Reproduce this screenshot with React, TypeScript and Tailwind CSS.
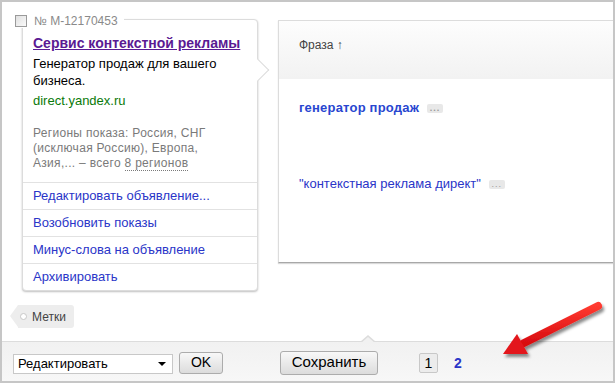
import React from "react";

const font = { fontFamily: '"Liberation Sans", Arial, sans-serif' };

function Dots() {
  return (
    <span className="inline-flex items-center justify-center ml-[8px] w-[16px] h-[9px] rounded-[2px] bg-[#e8e8e8] text-[#999] text-[9px] leading-none tracking-[1px] align-middle">
      ...
    </span>
  );
}

function AdCard() {
  const actions = [
    "Редактировать объявление...",
    "Возобновить показы",
    "Минус-слова на объявление",
    "Архивировать",
  ];
  return (
    <div className="flex flex-col">
      <div className="relative z-10 flex items-center ml-[13px] h-[14px] self-start bg-white pr-[6px] pb-[1px] mb-[-1px]">
        <span className="w-[12px] h-[12px] border border-[#9a9a9a] bg-gradient-to-br from-[#e0e0e0] to-[#fafafa]" />
        <span className="ml-[7px] text-[12px] text-[#8a8a8a]">№ M-12170453</span>
      </div>
      <div className="relative ml-[20px] -mt-[8px] w-[236px] border border-[#dcdcdc] rounded-[4px] bg-white shadow-[0_1px_2px_rgba(0,0,0,0.25)]">
        <div className="absolute right-[-9px] top-[42px] w-[16px] h-[16px] rotate-45 border-t border-r border-[#dcdcdc] bg-white" />
        <div className="relative px-[10px] pt-[15px] pb-[11px]">
          <div className="text-[14px] font-bold text-[#5a1a93] underline leading-[16px]">
            Сервис контекстной рекламы
          </div>
          <div className="mt-[4px] text-[13px] leading-[17px] text-black w-[200px]">
            Генератор продаж для вашего бизнеса.
          </div>
          <div className="mt-[4px] text-[13px] leading-[16px] text-[#0a7a0a]">direct.yandex.ru</div>
          <div className="mt-[17px] text-[12px] leading-[15px] text-[#7a7a7a] tracking-[0.3px]">
            Регионы показа: Россия, СНГ
            <br />
            (исключая Россию), Европа,
            <br />
            Азия,... – всего{" "}
            <span className="border-b border-dotted border-[#7a7a7a]">8 регионов</span>
          </div>
        </div>
        {actions.map((a) => (
          <div
            key={a}
            className="relative h-[27px] border-t border-[#e2e2e2] px-[10px] flex items-center text-[13px] text-[#2a35c8]"
          >
            {a}
          </div>
        ))}
      </div>
      <div className="ml-[8px] mt-[14px] flex">
        <div className="relative ml-[8px] h-[23px] pl-[14px] pr-[8px] flex items-center rounded-r-[3px] bg-[#ededed] text-[12px] text-[#444]">
          <div className="absolute left-[-8px] top-0 w-0 h-0 border-y-[11.5px] border-y-transparent border-r-[8px] border-r-[#ededed]" />
          <span className="absolute left-[2px] top-[8px] w-[7px] h-[7px] rounded-full border border-[#c8c8c8] bg-white" />
          Метки
        </div>
      </div>
    </div>
  );
}

function PhrasePanel() {
  return (
    <div className="flex-1 ml-[10px] mt-[6px] h-[243px] border-l border-t border-[#dcdcdc] border-b border-b-[#a8a8a8] bg-white flex flex-col shadow-[0_1px_1px_rgba(0,0,0,0.15)]">
      <div className="h-[58px] bg-gradient-to-b from-[#fdfdfd] to-[#f2f2f2] pl-[20px] pt-[15px] text-[12px] text-[#444]">
        Фраза ↑
      </div>
      <div className="pl-[20px] pt-[21px] text-[13px] font-bold text-[#2846d0] leading-[16px] tracking-[0.2px]">
        генератор продаж
        <Dots />
      </div>
      <div className="pl-[20px] pt-[60px] text-[13px] text-[#2a35c8] leading-[16px]">
        "контекстная реклама директ"
        <Dots />
      </div>
    </div>
  );
}

function Button({ children, className }: { children: React.ReactNode; className: string }) {
  return (
    <div
      className={
        "flex items-center justify-center border border-[#acacac] rounded-[3px] bg-gradient-to-b from-[#f8f8f8] to-[#dcdcdc] text-black " +
        className
      }
    >
      {children}
    </div>
  );
}

function BottomBar() {
  return (
    <div className="relative h-[40px] border-t border-[#dcdcdc] bg-gradient-to-b from-[#f1f1f1] to-[#f7f7f7] flex items-center">
      <div className="absolute left-[358px] top-[-7px] w-0 h-0 border-x-[8px] border-x-transparent border-b-[7px] border-b-[#dcdcdc]" />
      <div className="absolute left-[359px] top-[-5px] w-0 h-0 border-x-[7px] border-x-transparent border-b-[6px] border-b-[#f1f1f1]" />
      <div className="ml-[11px] mt-[4px] w-[160px] h-[20px] border border-[#c8c8c8] bg-white flex items-center pl-[4px] pr-[6px] text-[13px] text-black">
        <span className="flex-1">Редактировать</span>
        <span className="w-0 h-0 border-x-[4px] border-x-transparent border-t-[4px] border-t-black" />
      </div>
      <Button className="ml-[6px] mt-[2px] w-[44px] h-[22px] text-[14px]">OK</Button>
      <Button className="ml-[57px] mt-[2px] w-[98px] h-[24px] text-[15px]">Сохранить</Button>
      <div className="ml-[41px] mt-[3px] w-[19px] h-[20px] border border-[#c8c8c8] rounded-[2px] bg-[#ececec] flex items-center justify-center text-[14px] text-black">
        1
      </div>
      <div className="ml-[16px] mt-[3px] text-[14px] font-bold text-[#2a35c8]">2</div>
    </div>
  );
}

function RedArrow() {
  return (
    <svg className="absolute left-0 top-0 pointer-events-none" width="615" height="383">
      <defs>
        <filter id="sh" x="-20%" y="-20%" width="140%" height="140%">
          <feDropShadow dx="2" dy="3" stdDeviation="1.5" floodColor="#000" floodOpacity="0.45" />
        </filter>
        <linearGradient id="rg" x1="0" y1="0" x2="0" y2="1">
          <stop offset="0" stopColor="#ff3a30" />
          <stop offset="1" stopColor="#d80c10" />
        </linearGradient>
      </defs>
      <g filter="url(#sh)">
        <line x1="596" y1="304" x2="522" y2="341" stroke="url(#rg)" strokeWidth="8" strokeLinecap="round" />
        <polygon points="501,352 526,352 515,332" fill="#e3151a" />
      </g>
    </svg>
  );
}

export default function App() {
  return (
    <div
      className="relative w-[615px] h-[383px] border-2 border-[#c6c6c6] bg-white flex flex-col overflow-hidden"
      style={font}
    >
      <div className="flex-1 flex pt-[12px]">
        <div className="w-[266px] shrink-0">
          <AdCard />
        </div>
        <PhrasePanel />
      </div>
      <BottomBar />
      <RedArrow />
    </div>
  );
}
